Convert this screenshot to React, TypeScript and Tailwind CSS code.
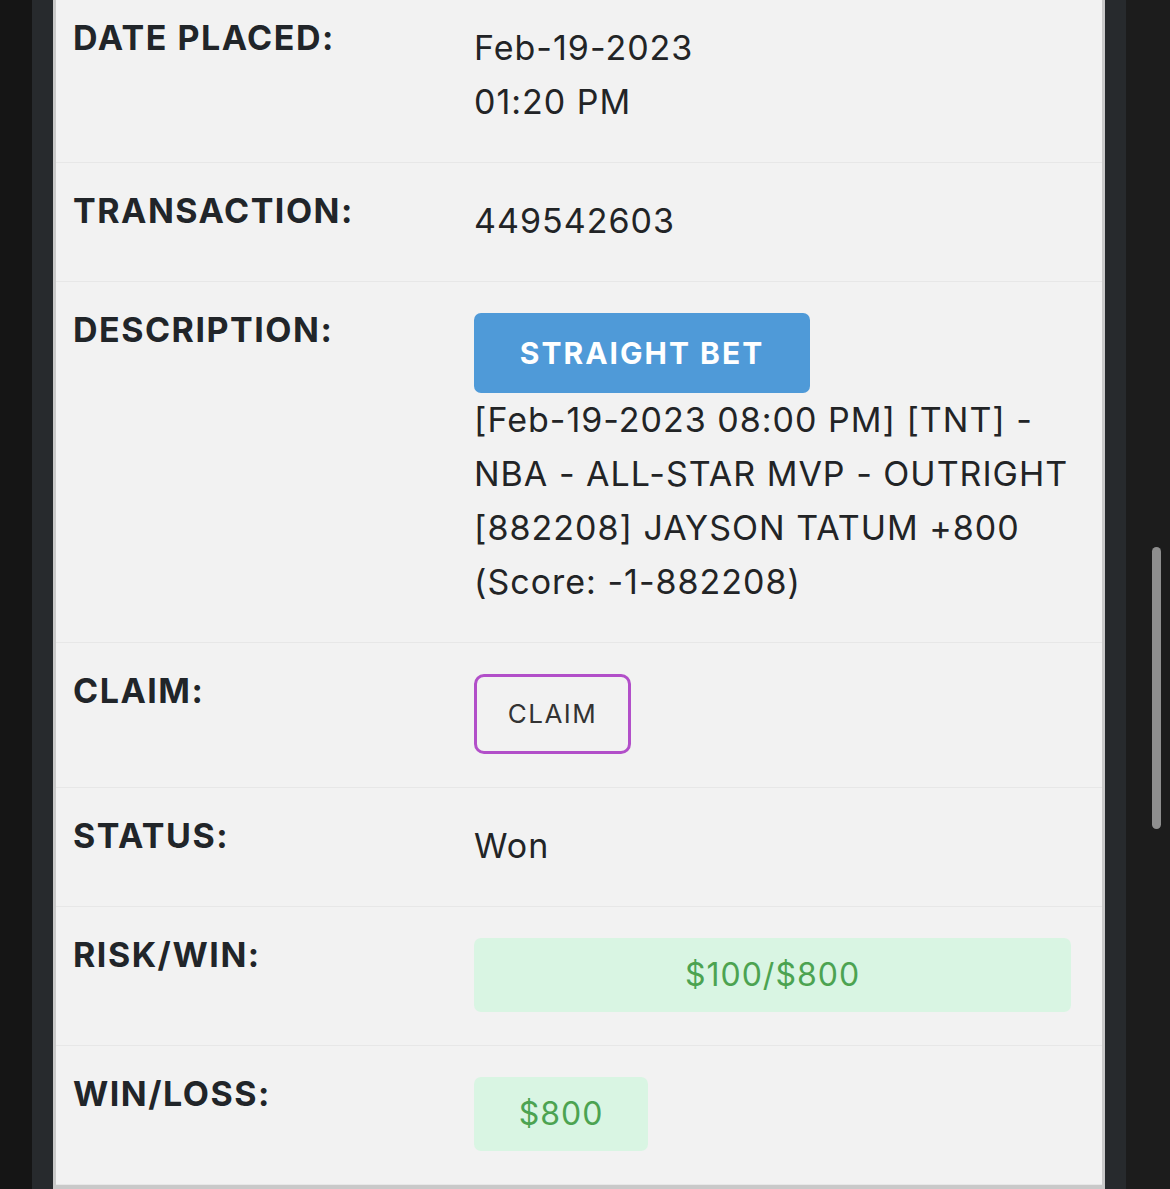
import type { ReactNode } from 'react';

const font = { fontFamily: 'Inter, "Noto Sans", sans-serif' };

function Row({ label, children, first }: { label: string; children: ReactNode; first?: boolean }) {
  return (
    <div
      className={`grid grid-cols-[401px_1fr] pl-[17px] pr-[31px] pb-[33px] border-b border-[#e7e7e7] ${
        first ? 'pt-[21px]' : 'pt-[31px]'
      }`}
    >
      <div className="text-[34px] leading-[33px] font-bold tracking-[1.5px] text-[#212529]">{label}</div>
      <div className="text-[34px] leading-[54px] tracking-[1px] text-[#222426] whitespace-nowrap">{children}</div>
    </div>
  );
}

export default function App() {
  return (
    <div className="flex h-[1189px] w-[1170px] overflow-hidden bg-[#151515]" style={font}>
      <div className="w-[32px] shrink-0 bg-[#151515]" />
      <div className="w-[21px] shrink-0 bg-[#272a2d]" />
      <div className="w-[1052px] shrink-0 h-[1189px] bg-[#f2f2f2] border-l-[3px] border-r-[3px] border-b-[4px] border-[#c9c9c9] overflow-hidden">
        <Row label="DATE PLACED:" first>
          <div>Feb-19-2023</div>
          <div>01:20 PM</div>
        </Row>
        <Row label="TRANSACTION:">449542603</Row>
        <Row label="DESCRIPTION:">
          <div className="flex">
            <span className="h-[80px] w-[336px] rounded-[7px] bg-[#4f9ad8] text-white text-[30px] font-bold tracking-[2px] flex items-center justify-center">
              STRAIGHT BET
            </span>
          </div>
          <div>[Feb-19-2023 08:00 PM] [TNT] -</div>
          <div>NBA - ALL-STAR MVP - OUTRIGHT</div>
          <div>[882208] JAYSON TATUM +800</div>
          <div>(Score: -1-882208)</div>
        </Row>
        <Row label="CLAIM:">
          <div className="flex">
            <span className="h-[80px] w-[157px] rounded-[10px] border-[3px] border-[#b24fc9] text-[26px] tracking-[1.5px] text-[#333] flex items-center justify-center">
              CLAIM
            </span>
          </div>
        </Row>
        <Row label="STATUS:">Won</Row>
        <Row label="RISK/WIN:">
          <div className="h-[74px] rounded-[7px] bg-[#d9f5e3] text-[#4ca351] text-[32px] tracking-[1px] flex items-center justify-center">
            $100/$800
          </div>
        </Row>
        <Row label="WIN/LOSS:">
          <div className="flex">
            <span className="h-[74px] w-[174px] rounded-[7px] bg-[#d9f5e3] text-[#4ca351] text-[32px] tracking-[1px] flex items-center justify-center">
              $800
            </span>
          </div>
        </Row>
      </div>
      <div className="w-[21px] shrink-0 bg-[#272a2d]" />
      <div className="relative w-[44px] shrink-0 bg-[#1c1c1c]">
        <div className="absolute left-[26px] top-[547px] h-[282px] w-[9px] rounded-full bg-[#8e8e8e]" />
      </div>
    </div>
  );
}
